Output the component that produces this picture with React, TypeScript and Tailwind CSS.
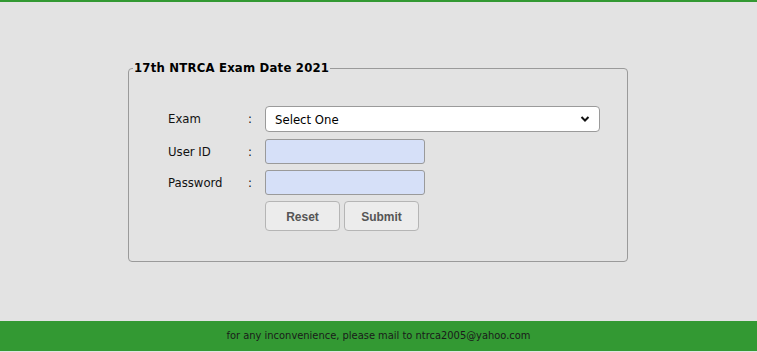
import { useState } from "react";

const tahoma = "font-['Tahoma','DejaVu_Sans_Condensed','DejaVu_Sans',sans-serif]";

export default function App() {
  const [exam, setExam] = useState("");

  return (
    <div className="flex h-[352px] w-full flex-col overflow-hidden border-t-2 border-[#339933] bg-[#e3e3e3]">
      <main className="flex-1">
        <fieldset className="ml-[128px] mt-[58px] w-[500px] rounded-[4px] border border-[#9a9a9a] pb-[30px] pl-[4px]">
          <legend className={`px-[1px] text-[13px] font-bold leading-4 tracking-[0.2px] text-black ${tahoma}`}>
            17th NTRCA Exam Date 2021
          </legend>

          <form className={`ml-[35px] pt-[30px] text-[13px] text-[#111] ${tahoma}`}>
            <div className="flex items-center">
              <label className="w-[80px]">Exam</label>
              <span className="w-[17px]">:</span>
              <div className="relative">
                <select
                  value={exam}
                  onChange={(e) => setExam(e.target.value)}
                  className="h-[26px] w-[335px] appearance-none rounded-[4px] border border-[#9a9a9a] bg-white pl-[9px] pt-[1px] text-[13px] text-black"
                >
                  <option value="">Select One</option>
                  <option value="school">School Level</option>
                  <option value="college">College Level</option>
                </select>
                <svg
                  className="pointer-events-none absolute right-[10px] top-[9px]"
                  width="10"
                  height="8"
                  viewBox="0 0 10 8"
                >
                  <path d="M1.5 2 L5 5.5 L8.5 2" fill="none" stroke="#111" strokeWidth="2" />
                </svg>
              </div>
            </div>

            <div className="mt-[7px] flex items-center">
              <label className="w-[80px]">User ID</label>
              <span className="w-[17px]">:</span>
              <input className="h-[25px] w-[160px] rounded-[3px] border border-[#9a9a9a] bg-[#d6e0f8]" />
            </div>

            <div className="mt-[6px] flex items-center">
              <label className="w-[80px]">Password</label>
              <span className="w-[17px]">:</span>
              <input type="password" className="h-[25px] w-[160px] rounded-[3px] border border-[#9a9a9a] bg-[#d6e0f8]" />
            </div>

            <div className="ml-[97px] mt-[6px] flex gap-[4px]">
              <button
                type="reset"
                className="h-[30px] w-[75px] rounded-[4px] border border-[#b5b5b5] bg-[#ececec] pt-[2px] font-['Liberation_Sans',Arial,sans-serif] text-[12px] font-bold text-[#555]"
              >
                Reset
              </button>
              <button
                type="button"
                className="h-[30px] w-[75px] rounded-[4px] border border-[#b5b5b5] bg-[#ececec] pt-[2px] font-['Liberation_Sans',Arial,sans-serif] text-[12px] font-bold text-[#555]"
              >
                Submit
              </button>
            </div>
          </form>
        </fieldset>
      </main>

      <footer className={`mb-[1px] flex h-[30px] items-center justify-center bg-[#339933] pt-[1px] text-[11px] text-[#1a1a1a] ${tahoma}`}>
        for any inconvenience, please mail to ntrca2005@yahoo.com
      </footer>
    </div>
  );
}
